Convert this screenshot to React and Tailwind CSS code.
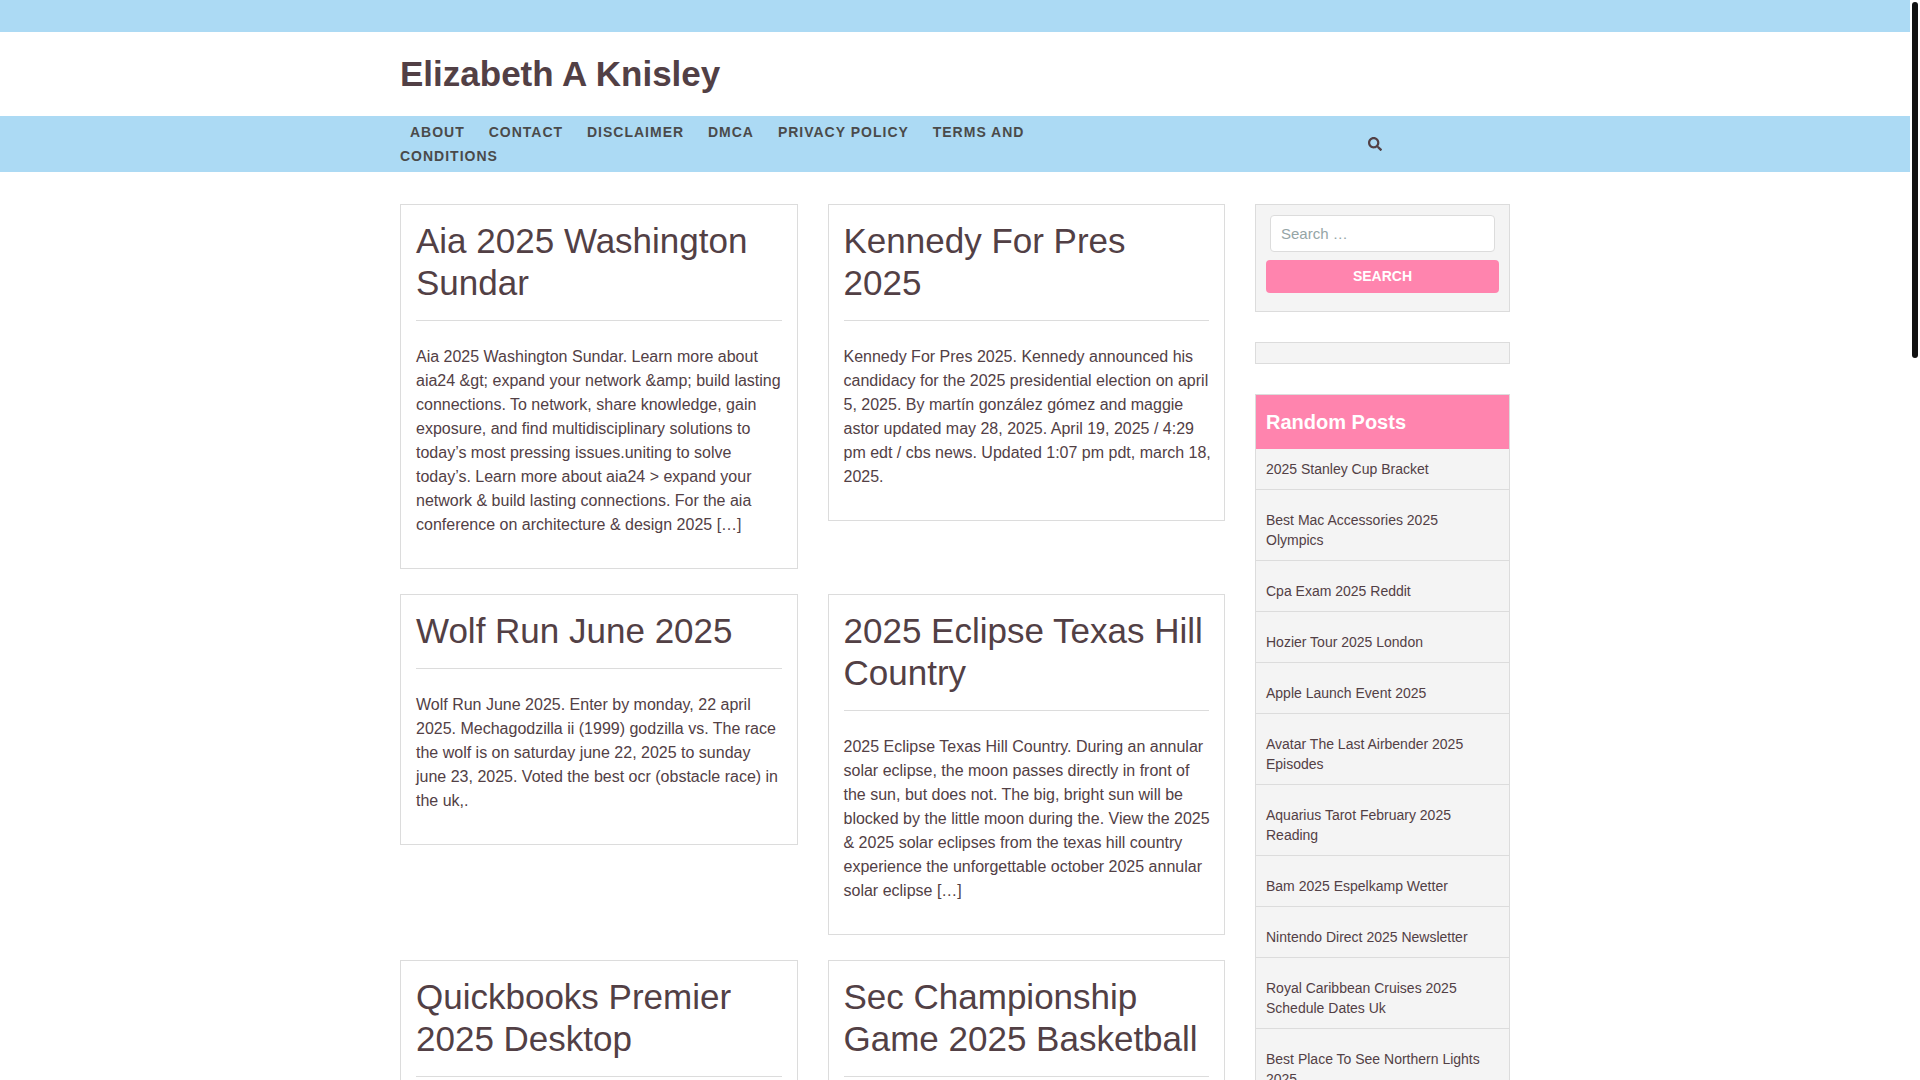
import React from "react";
import { FaSearch } from "react-icons/fa";

const menu = ["About", "Contact", "Disclaimer", "DMCA", "Privacy Policy", "Terms and Conditions"];

const posts = [
  {
    title: "Aia 2025 Washington Sundar",
    text: "Aia 2025 Washington Sundar. Learn more about aia24 &gt; expand your network &amp; build lasting connections. To network, share knowledge, gain exposure, and find multidisciplinary solutions to today’s most pressing issues.uniting to solve today’s. Learn more about aia24 > expand your network & build lasting connections. For the aia conference on architecture & design 2025 […]",
  },
  {
    title: "Kennedy For Pres 2025",
    text: "Kennedy For Pres 2025. Kennedy announced his candidacy for the 2025 presidential election on april 5, 2025. By martín gonzález gómez and maggie astor updated may 28, 2025. April 19, 2025 / 4:29 pm edt / cbs news. Updated 1:07 pm pdt, march 18, 2025.",
  },
  {
    title: "Wolf Run June 2025",
    text: "Wolf Run June 2025. Enter by monday, 22 april 2025. Mechagodzilla ii (1999) godzilla vs. The race the wolf is on saturday june 22, 2025 to sunday june 23, 2025. Voted the best ocr (obstacle race) in the uk,.",
  },
  {
    title: "2025 Eclipse Texas Hill Country",
    text: "2025 Eclipse Texas Hill Country. During an annular solar eclipse, the moon passes directly in front of the sun, but does not. The big, bright sun will be blocked by the little moon during the. View the 2025 & 2025 solar eclipses from the texas hill country experience the unforgettable october 2025 annular solar eclipse […]",
  },
  { title: "Quickbooks Premier 2025 Desktop", text: "" },
  { title: "Sec Championship Game 2025 Basketball", text: "" },
];

const randomPosts = [
  "2025 Stanley Cup Bracket",
  "Best Mac Accessories 2025 Olympics",
  "Cpa Exam 2025 Reddit",
  "Hozier Tour 2025 London",
  "Apple Launch Event 2025",
  "Avatar The Last Airbender 2025 Episodes",
  "Aquarius Tarot February 2025 Reading",
  "Bam 2025 Espelkamp Wetter",
  "Nintendo Direct 2025 Newsletter",
  "Royal Caribbean Cruises 2025 Schedule Dates Uk",
  "Best Place To See Northern Lights 2025",
];

function Container({ className = "", children }) {
  return <div className={`mx-auto w-full max-w-[1140px] px-[15px] ${className}`}>{children}</div>;
}

function PostCard({ post }) {
  return (
    <article className="border border-[#dcdcdc] px-[15px] pt-[15px] pb-[31px]">
      <h2 className="border-b border-[#dcdcdc] pb-4 text-[35px] leading-[42px]">
        <a href="#">{post.title}</a>
      </h2>
      <p className="mt-6 -mr-[3px] text-base">{post.text}</p>
    </article>
  );
}

function Sidebar() {
  return (
    <aside className="flex flex-col gap-[30px]">
      <form
        className="border border-[#dcdcdc] bg-[#f4f4f4] px-[10px] pt-[10px] pb-[18px]"
        role="search"
        onSubmit={(e) => e.preventDefault()}
      >
        <div className="flex px-1">
          <input
            type="search"
            aria-label="Search for"
            placeholder="Search …"
            className="h-[37px] w-full rounded border border-[#dcdcdc] bg-white px-[10px] text-[15px] placeholder:text-[#95a5a6]"
          />
        </div>
        <button
          type="submit"
          className="mt-2 block h-[33px] w-full rounded bg-[#ff84ae] pb-[2px] text-sm font-bold text-white"
        >
          SEARCH
        </button>
      </form>
      <div className="h-[22px] border border-[#dcdcdc] bg-[#f4f4f4]" />
      <section className="border border-[#dcdcdc] bg-[#f4f4f4]">
        <h3 className="bg-[#ff84ae] px-[10px] py-[15px] text-xl leading-6 font-bold text-white">Random Posts</h3>
        <ul className="flex flex-col gap-[10px]">
          {randomPosts.map((title) => (
            <li key={title} className="border-b border-[#dcdcdc] px-[10px] py-[10px] text-sm">
              <a href="#">{title}</a>
            </li>
          ))}
        </ul>
      </section>
    </aside>
  );
}

export default function App() {
  return (
    <div className="flex h-screen overflow-hidden bg-white font-['Liberation_Sans',Arial,sans-serif] text-[#524045]">
      <div className="min-w-0 flex-1">
        <div className="h-8 bg-[#acdaf4]" />
        <header className="py-[21px]">
          <Container>
            <h1 className="text-[35px] leading-[42px] font-bold">
              <a href="#">Elizabeth A Knisley</a>
            </h1>
          </Container>
        </header>
        <nav className="bg-[#acdaf4] py-1">
          <Container className="flex items-center">
            <div className="w-2/3 pr-[15px] text-sm leading-6 font-bold text-[#4a4a4a]">
              {menu.map((item) => (
                <React.Fragment key={item}>
                  <a href="#" className="px-[10px] tracking-[1px] uppercase">
                    {item}
                  </a>{" "}
                </React.Fragment>
              ))}
            </div>
            <div className="flex flex-1 justify-center pl-[100px]">
              <button type="button" aria-label="Open search">
                <FaSearch size={14} />
              </button>
            </div>
          </Container>
        </nav>
        <Container className="grid grid-cols-[minmax(0,1fr)_255px] gap-x-[30px] pt-8">
          <main className="grid grid-cols-2 items-start gap-x-[30px] gap-y-[25px] self-start">
            {posts.map((post) => (
              <PostCard key={post.title} post={post} />
            ))}
          </main>
          <Sidebar />
        </Container>
      </div>
      <div className="w-[10px] shrink-0 p-[2px]" aria-hidden="true">
        <div className="h-1/3 max-h-[356px] rounded-full bg-[#111]" />
      </div>
    </div>
  );
}
